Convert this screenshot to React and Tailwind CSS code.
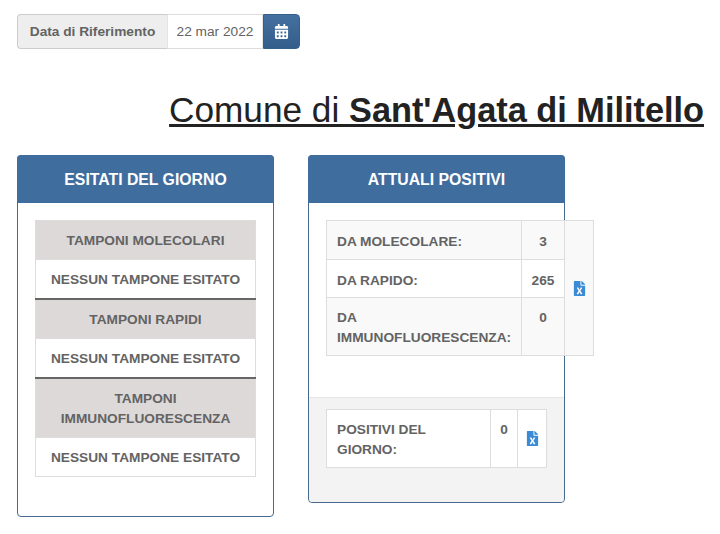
import React from 'react';
import { FaCalendarAlt, FaFileExcel } from 'react-icons/fa';

const font = "font-['Liberation_Sans',Arial,sans-serif]";

const EsitiRow = ({ title, heavy }) => (
  <>
    <tr>
      <td className={`bg-[#ddd9d9] px-2 pt-[10px] pb-[8px] text-center border-x border-b border-[#ddd] ${heavy ? 'border-t-2 border-t-[#666]' : 'border-t'}`}>
        {title}
      </td>
    </tr>
    <tr>
      <td className="bg-white px-2 pt-[10px] pb-[8px] text-center border border-[#ddd]">NESSUN TAMPONE ESITATO</td>
    </tr>
  </>
);

const Panel = ({ title, children, className }) => (
  <div className={`w-[257px] rounded-[4px] border border-[#47698f] bg-white ${className}`}>
    <div className="h-[48px] -m-px mb-0 pt-[2px] rounded-t-[4px] bg-[#3f6d9e] flex items-center justify-center text-white text-[15.8px] font-bold">
      {title}
    </div>
    {children}
  </div>
);

export default function App() {
  return (
    <div className={`${font} w-[720px] h-[534px] overflow-hidden bg-white px-[17px] pt-[14px] text-[13.7px] leading-[20px] text-[#636363]`}>
      {/* data di riferimento */}
      <div className="flex h-[35px] w-[283px]">
        <div className="w-[150px] flex items-center justify-center bg-[#eee] border border-[#ccc] border-r-0 rounded-l-[4px] font-bold">
          Data di Riferimento
        </div>
        <div className="w-[96px] flex items-center justify-center bg-white border border-[#ddd] border-x-[#e4e4e4]">
          22 mar 2022
        </div>
        <button className="w-[37px] flex items-center justify-center rounded-r-[4px] border border-[#35608c] bg-gradient-to-b from-[#44709f] to-[#345d8b] text-white">
          <FaCalendarAlt size={15} />
        </button>
      </div>

      <h1 className="mt-[41px] mr-[-1px] text-right text-[35.2px] leading-[40px] text-[#222] underline font-normal">
        Comune di <b className="text-[34.3px]">Sant'Agata di Militello</b>
      </h1>

      <div className="mt-[25px] flex items-start gap-[34px] font-bold">
        <Panel title="ESITATI DEL GIORNO" className="h-[362px]">
          <div className="px-[17px] pt-[17px]">
            <table className="w-[221px] border-collapse">
              <tbody>
                <EsitiRow title="TAMPONI MOLECOLARI" />
                <EsitiRow title="TAMPONI RAPIDI" heavy />
                <EsitiRow title={<>TAMPONI<br />IMMUNOFLUORESCENZA</>} heavy />
              </tbody>
            </table>
          </div>
        </Panel>

        <Panel title="ATTUALI POSITIVI" className="h-[348px] flex flex-col">
          <div className="h-[195px] border-b border-[#e5e5e5] px-[17px] pt-[17px]">
            <table className="w-[267px] table-fixed border-collapse leading-[19.5px]">
              <colgroup>
                <col className="w-[195px]" />
                <col className="w-[43px]" />
                <col className="w-[29px]" />
              </colgroup>
              <tbody>
                <tr className="bg-[#f9f9f9]">
                  <td className="border border-[#ddd] px-[10px] pt-[11px] pb-[7px]">DA MOLECOLARE:</td>
                  <td className="border border-[#ddd] pt-[11px] pb-[7px] text-center">3</td>
                  <td rowSpan={3} className="border border-[#ddd] bg-[#f9f9f9] align-middle">
                    <FaFileExcel size={15} className="mx-auto block text-[#3b8ad6]" />
                  </td>
                </tr>
                <tr className="bg-white">
                  <td className="border border-[#ddd] px-[10px] pt-[11px] pb-[7px]">DA RAPIDO:</td>
                  <td className="border border-[#ddd] pt-[11px] pb-[7px] text-center">265</td>
                </tr>
                <tr className="bg-[#f9f9f9]">
                  <td className="border border-[#ddd] px-[10px] pt-[10px] pb-[8px]">DA<br />IMMUNOFLUORESCENZA:</td>
                  <td className="border border-[#ddd] pt-[10px] pb-[8px] text-center align-top">0</td>
                </tr>
              </tbody>
            </table>
          </div>
          <div className="flex-1 rounded-b-[4px] bg-[#f3f3f3] px-[17px] pt-[11px]">
            <table className="w-[220px] table-fixed border-collapse bg-white leading-[19.5px]">
              <colgroup>
                <col className="w-[164px]" />
                <col className="w-[27px]" />
                <col className="w-[29px]" />
              </colgroup>
              <tbody>
                <tr>
                  <td className="border border-[#ddd] px-[10px] pt-[10px] pb-[8px]">POSITIVI DEL<br />GIORNO:</td>
                  <td className="border border-[#ddd] pt-[10px] pb-[8px] text-center align-top">0</td>
                  <td className="border border-[#ddd] align-middle">
                    <FaFileExcel size={15} className="mx-auto block text-[#3b8ad6]" />
                  </td>
                </tr>
              </tbody>
            </table>
          </div>
        </Panel>
      </div>
    </div>
  );
}
